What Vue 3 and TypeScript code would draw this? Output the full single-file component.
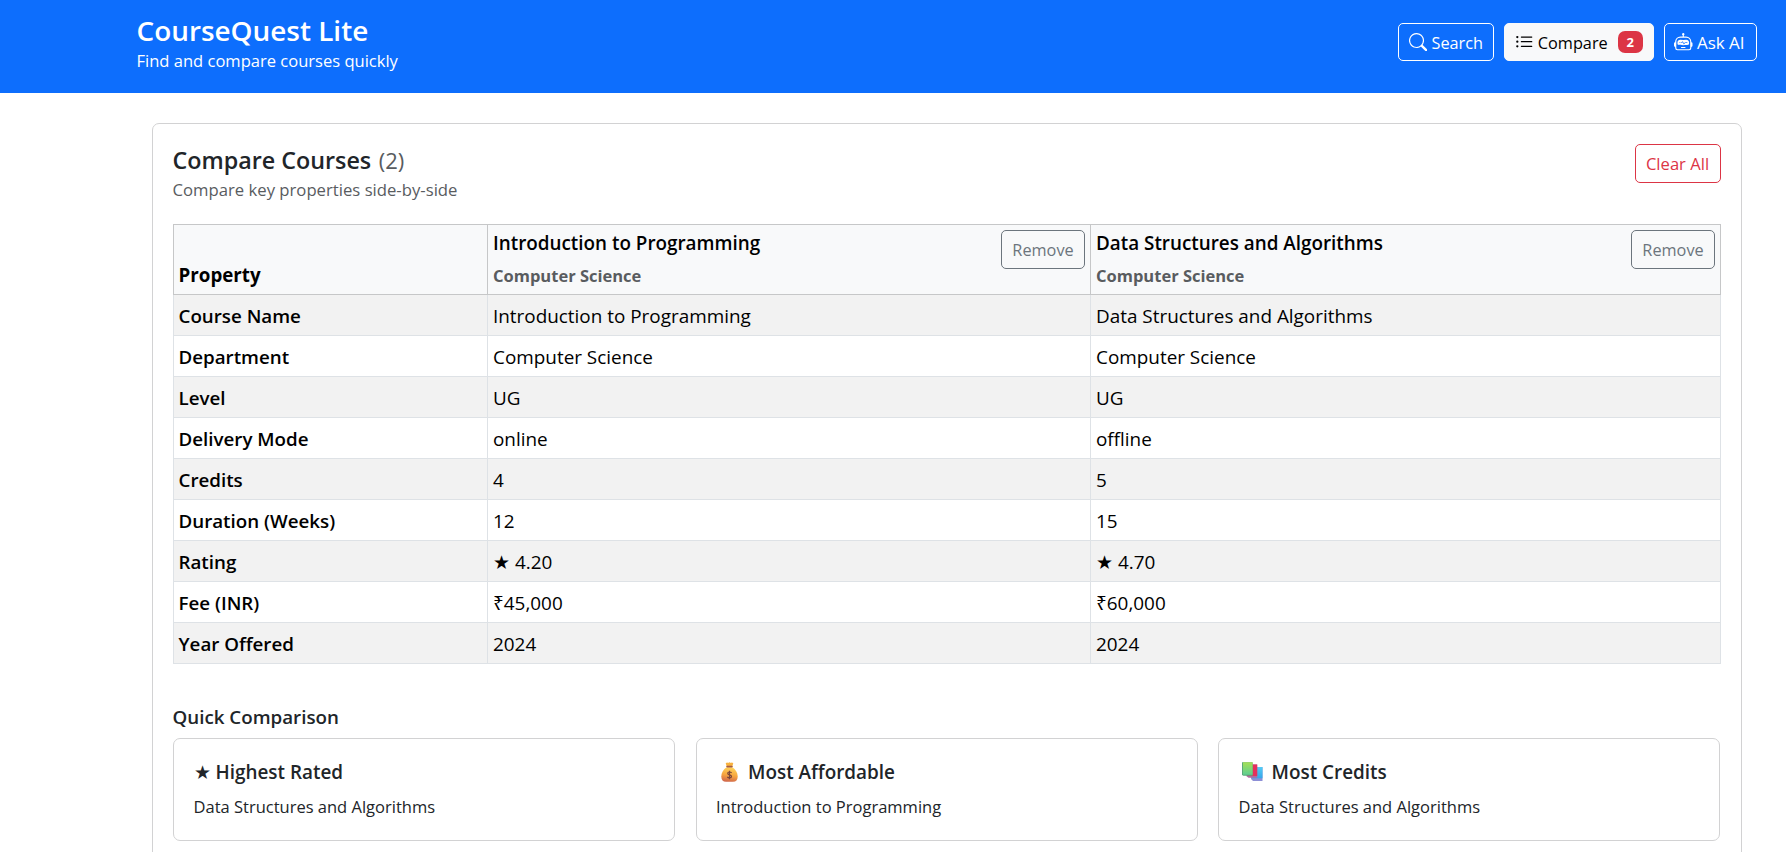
<script setup lang="ts">
import { computed, ref } from 'vue'

interface Course {
  id: number
  name: string
  department: string
  level: string
  mode: string
  credits: number
  weeks: number
  rating: number
  fee: number
  year: number
}

interface Property {
  label: string
  starred?: boolean
  value: (c: Course) => string | number
}

const courses = ref<Course[]>([
  { id: 1, name: 'Introduction to Programming', department: 'Computer Science', level: 'UG', mode: 'online', credits: 4, weeks: 12, rating: 4.2, fee: 45000, year: 2024 },
  { id: 2, name: 'Data Structures and Algorithms', department: 'Computer Science', level: 'UG', mode: 'offline', credits: 5, weeks: 15, rating: 4.7, fee: 60000, year: 2024 },
])

const properties: Property[] = [
  { label: 'Course Name', value: (c) => c.name },
  { label: 'Department', value: (c) => c.department },
  { label: 'Level', value: (c) => c.level },
  { label: 'Delivery Mode', value: (c) => c.mode },
  { label: 'Credits', value: (c) => c.credits },
  { label: 'Duration (Weeks)', value: (c) => c.weeks },
  { label: 'Rating', starred: true, value: (c) => c.rating.toFixed(2) },
  { label: 'Fee (INR)', value: (c) => '₹' + c.fee.toLocaleString('en-IN') },
  { label: 'Year Offered', value: (c) => c.year },
]

function best(score: (c: Course) => number): string {
  return [...courses.value].sort((a, b) => score(b) - score(a))[0]?.name ?? ''
}

const highlights = computed(() => [
  { icon: 'star', title: 'Highest Rated', name: best((c) => c.rating) },
  { icon: 'bag', title: 'Most Affordable', name: best((c) => -c.fee) },
  { icon: 'books', title: 'Most Credits', name: best((c) => c.credits) },
])

function remove(id: number) {
  courses.value = courses.value.filter((c) => c.id !== id)
}
</script>

<template>
  <div class="page">
    <header class="topbar">
      <div>
        <h1>CourseQuest Lite</h1>
        <p class="tagline">Find and compare courses quickly</p>
      </div>
      <nav class="actions">
        <button class="btn nav-search">
          <svg class="icon" viewBox="0 0 16 16"><path d="M11.742 10.344a6.5 6.5 0 1 0-1.397 1.398h-.001q.044.06.098.115l3.85 3.85a1 1 0 0 0 1.415-1.414l-3.85-3.85a1 1 0 0 0-.115-.1zM12 6.5a5.5 5.5 0 1 1-11 0 5.5 5.5 0 0 1 11 0" /></svg>
          <span>Search</span>
        </button>
        <button class="btn nav-compare">
          <svg class="icon" viewBox="0 0 16 16"><path fill-rule="evenodd" d="M5 11.5a.5.5 0 0 1 .5-.5h9a.5.5 0 0 1 0 1h-9a.5.5 0 0 1-.5-.5m0-4a.5.5 0 0 1 .5-.5h9a.5.5 0 0 1 0 1h-9a.5.5 0 0 1-.5-.5m0-4a.5.5 0 0 1 .5-.5h9a.5.5 0 0 1 0 1h-9a.5.5 0 0 1-.5-.5m-3 1a1 1 0 1 0 0-2 1 1 0 0 0 0 2m0 4a1 1 0 1 0 0-2 1 1 0 0 0 0 2m0 4a1 1 0 1 0 0-2 1 1 0 0 0 0 2" /></svg>
          <span>Compare</span>
          <span class="badge">{{ courses.length }}</span>
        </button>
        <button class="btn nav-ai">
          <svg class="icon" viewBox="0 0 16 16">
            <path d="M6 12.5a.5.5 0 0 1 .5-.5h3a.5.5 0 0 1 0 1h-3a.5.5 0 0 1-.5-.5M3 8.062C3 6.76 4.235 5.765 5.53 5.886a26.6 26.6 0 0 0 4.94 0C11.765 5.765 13 6.76 13 8.062v1.157a.93.93 0 0 1-.765.935c-.845.147-2.34.346-4.235.346s-3.39-.2-4.235-.346A.93.93 0 0 1 3 9.219zm4.542-.827a.25.25 0 0 0-.217.068l-.92.9a25 25 0 0 1-1.871-.183.25.25 0 0 0-.068.495c.55.076 1.232.149 2.02.193a.25.25 0 0 0 .189-.071l.754-.736.847 1.71a.25.25 0 0 0 .404.062l.932-.97a25 25 0 0 0 1.922-.188.25.25 0 0 0-.068-.495c-.538.074-1.207.145-1.98.189a.25.25 0 0 0-.166.076l-.754.785-.842-1.7a.25.25 0 0 0-.182-.135" />
            <path d="M8.5 1.866a1 1 0 1 0-1 0V3h-2A4.5 4.5 0 0 0 1 7.5V8a1 1 0 0 0-1 1v2a1 1 0 0 0 1 1v1a2 2 0 0 0 2 2h10a2 2 0 0 0 2-2v-1a1 1 0 0 0 1-1V9a1 1 0 0 0-1-1v-.5A4.5 4.5 0 0 0 10.5 3h-2zM14 7.5V13a1 1 0 0 1-1 1H3a1 1 0 0 1-1-1V7.5A3.5 3.5 0 0 1 5.5 4h5A3.5 3.5 0 0 1 14 7.5" />
          </svg>
          <span>Ask AI</span>
        </button>
      </nav>
    </header>

    <main class="panel">
      <div class="panel-head">
        <div>
          <h2>Compare Courses <span class="count">({{ courses.length }})</span></h2>
          <p class="hint">Compare key properties side-by-side</p>
        </div>
        <button class="btn clear" @click="courses = []">Clear All</button>
      </div>

      <table>
        <colgroup>
          <col class="col-label" />
          <col class="col-first" />
          <col />
        </colgroup>
        <thead>
          <tr>
            <th class="property">Property</th>
            <th v-for="c in courses" :key="c.id">
              <div class="course-head">
                <div>
                  <div class="course-name">{{ c.name }}</div>
                  <div class="course-dept">{{ c.department }}</div>
                </div>
                <button class="btn remove" @click="remove(c.id)">Remove</button>
              </div>
            </th>
          </tr>
        </thead>
        <tbody>
          <tr v-for="p in properties" :key="p.label">
            <th>{{ p.label }}</th>
            <td v-for="c in courses" :key="c.id"><span v-if="p.starred" class="star">★</span>{{ p.value(c) }}</td>
          </tr>
        </tbody>
      </table>

      <h3>Quick Comparison</h3>
      <div class="cards">
        <article v-for="h in highlights" :key="h.icon" class="card">
          <h4>
            <span v-if="h.icon === 'star'" class="star">★</span>
            <svg v-else-if="h.icon === 'bag'" class="bag" viewBox="0 0 17 20">
              <defs>
                <linearGradient id="bagFill" x1="0.6" y1="0" x2="0.4" y2="1">
                  <stop offset="0" stop-color="#ffd45a" />
                  <stop offset="0.55" stop-color="#f6a53f" />
                  <stop offset="1" stop-color="#d0664a" />
                </linearGradient>
              </defs>
              <path d="M5.6 4 4.7 1.2Q6 .2 7.2.9 8.5-.3 9.8.9 11 .2 12.3 1.2L11.4 4z" fill="#f8b23f" />
              <path d="M5.6 5.3C2.5 7.3.3 10.7.3 14.4.3 18 2 19.8 5 19.8h7c3 0 4.700-1.800 4.700-5.400 0-3.700-2.200-7.100-5.300-9.100z" fill="url(#bagFill)" />
              <rect x="5.2" y="3.7" width="6.6" height="1.7" rx=".8" fill="#a75c43" />
              <path d="M10.6 10.9Q9.900 10 8.500 10 6.700 10 6.700 11.300 6.700 12.500 8.500 12.800 10.500 13.200 10.500 14.500 10.500 15.900 8.500 15.900 7 15.900 6.300 14.900M8.500 8.700V17.300" fill="none" stroke="#7b463b" stroke-width="1.2" />
            </svg>
            <svg v-else class="books" viewBox="0 0 21 19">
              <defs>
                <linearGradient id="greenBook" x1="0" y1="0" x2="0" y2="1">
                  <stop offset="0" stop-color="#a5df55" />
                  <stop offset="1" stop-color="#5fcf91" />
                </linearGradient>
                <linearGradient id="blueBook" x1="0" y1="0" x2="0" y2="1">
                  <stop offset="0" stop-color="#55cdf5" />
                  <stop offset="1" stop-color="#35a5ea" />
                </linearGradient>
              </defs>
              <path d="M9 5h11.5v14H11l-2-2z" fill="#8d8fd6" />
              <path d="M10 5h10.5v11.3H10z" fill="url(#blueBook)" />
              <path d="M4.5 2.5h10.7v13.3H6.5l-2-1.5z" fill="#b06aa0" />
              <path d="M5.5 2.5h9.7v11.5H5.5z" fill="#e5305d" />
              <path d="M0 .3h10.6v13.5H1.5L0 13z" fill="#5aa878" />
              <path d="M1 .3h9.6v12.4H1z" fill="url(#greenBook)" />
            </svg>
            <span>{{ h.title }}</span>
          </h4>
          <p>{{ h.name }}</p>
        </article>
      </div>
    </main>
  </div>
</template>

<style>
body {
  overflow: hidden;
  background: #fff;
}
</style>

<style scoped>
.page {
  height: 852px;
  overflow: hidden;
  font-family: "Open Sans", "Noto Sans", sans-serif;
  font-size: 16.5px;
  color: #212529;
}
h1, h2, h3, h4, p {
  margin: 0;
  font-weight: 600;
}
p {
  font-weight: 400;
}
.topbar {
  box-sizing: border-box;
  height: 93px;
  padding: 14px 29px 0 136.5px;
  display: flex;
  justify-content: space-between;
  align-items: flex-start;
  background: #0d6efd;
  color: #fff;
}
h1 {
  font-size: 27.9px;
  line-height: 33px;
}
.tagline {
  font-size: 16.55px;
  line-height: 28px;
}
.actions {
  display: flex;
  gap: 10px;
  margin-top: 9px;
}
.btn {
  box-sizing: border-box;
  display: flex;
  align-items: center;
  justify-content: center;
  height: 38px;
  padding: 1px 0 0;
  border: 1px solid;
  border-radius: 5px;
  background: transparent;
  color: inherit;
  font: 400 16.3px/24px "Open Sans", "Noto Sans", sans-serif;
  white-space: nowrap;
}
.icon {
  width: 18.5px;
  height: 18.5px;
  margin: -1px 4px 0 0;
  fill: currentColor;
}
.nav-search {
  width: 96px;
}
.nav-compare {
  width: 150px;
  border-color: #f8f9fa;
  background: #f8f9fa;
  color: #000;
}
.nav-ai {
  width: 93px;
  padding-right: 2px;
  font-size: 17px;
}
.badge {
  width: 25px;
  height: 22px;
  margin: -1px 0 0 10px;
  border-radius: 7px;
  background: #dc3545;
  color: #fff;
  font-size: 13px;
  font-weight: 700;
  line-height: 23px;
  text-align: center;
}
.panel {
  box-sizing: border-box;
  width: 1590px;
  height: 800px;
  margin: 30px 0 0 152px;
  padding: 20px;
  border: 1px solid #d2d2d3;
  border-radius: 7px;
}
.panel-head {
  display: flex;
  justify-content: space-between;
  align-items: flex-start;
  height: 80px;
}
h2 {
  margin-left: -0.5px;
  font-size: 23.3px;
  line-height: 32px;
}
.count {
  margin-left: 1.5px;
  color: #595c5f;
  font-size: 22px;
  font-weight: 400;
}
.hint {
  margin: -1px 0 0 -0.5px;
  font-size: 16.7px;
  line-height: 30px;
  color: #595c5f;
}
.clear {
  width: 86px;
  height: 39px;
  padding-right: 1px;
  font-size: 16.6px;
  color: #dc3545;
}
table {
  width: 1548px;
  table-layout: fixed;
  border-collapse: collapse;
  color: #000;
  font-size: 18.9px;
  line-height: 25px;
}
.col-label {
  width: 314px;
}
.col-first {
  width: 603px;
}
th, td {
  height: 25px;
  border: 1px solid #dee2e6;
  text-align: left;
}
td {
  padding: 9px 5px 6px;
}
th {
  padding: 8px 5px 7px 4.5px;
  font-size: 18.75px;
  font-weight: 600;
}
thead th {
  height: 59px;
  padding: 5px;
  border-color: #c6c7c8;
  background: #f8f9fa;
}
thead .property {
  height: 57px;
  padding: 5px 5px 7px 4.5px;
  vertical-align: bottom;
}
tbody tr:nth-child(odd) {
  background: #f2f2f2;
}
thead .property {
  font-weight: 700;
}
.course-head {
  display: flex;
  justify-content: space-between;
  align-items: flex-start;
  height: 59px;
}
.course-name {
  height: 24px;
  margin: 1px 0 7px;
  font-size: 18.85px;
  line-height: 24px;
}
.course-dept {
  color: #595c5f;
  font-size: 16.5px;
  font-weight: 700;
  line-height: 27px;
}
.remove {
  width: 84px;
  height: 39px;
  color: #6c757d;
}
.star {
  display: inline-block;
  width: 22px;
  font-weight: 400;
}
h3 {
  margin: 40px 0 9px -0.5px;
  font-size: 18.75px;
  line-height: 25px;
}
.cards {
  display: grid;
  grid-template-columns: repeat(3, 1fr);
  gap: 20.5px;
  width: 1547px;
}
.card {
  box-sizing: border-box;
  height: 103px;
  padding: 20px 20px 0 19.5px;
  border: 1px solid #d2d2d3;
  border-radius: 7px;
}
h4 {
  display: flex;
  align-items: center;
  height: 25px;
  margin-bottom: 9px;
  font-size: 18.9px;
  line-height: 25px;
}
h4 span {
  padding-top: 2px;
}
.card p {
  line-height: 28px;
}
.bag {
  width: 17px;
  height: 20px;
  margin: 0 10px 0 5px;
}
.books {
  width: 21px;
  height: 19px;
  margin: 0 9px 0 3px;
}
</style>
